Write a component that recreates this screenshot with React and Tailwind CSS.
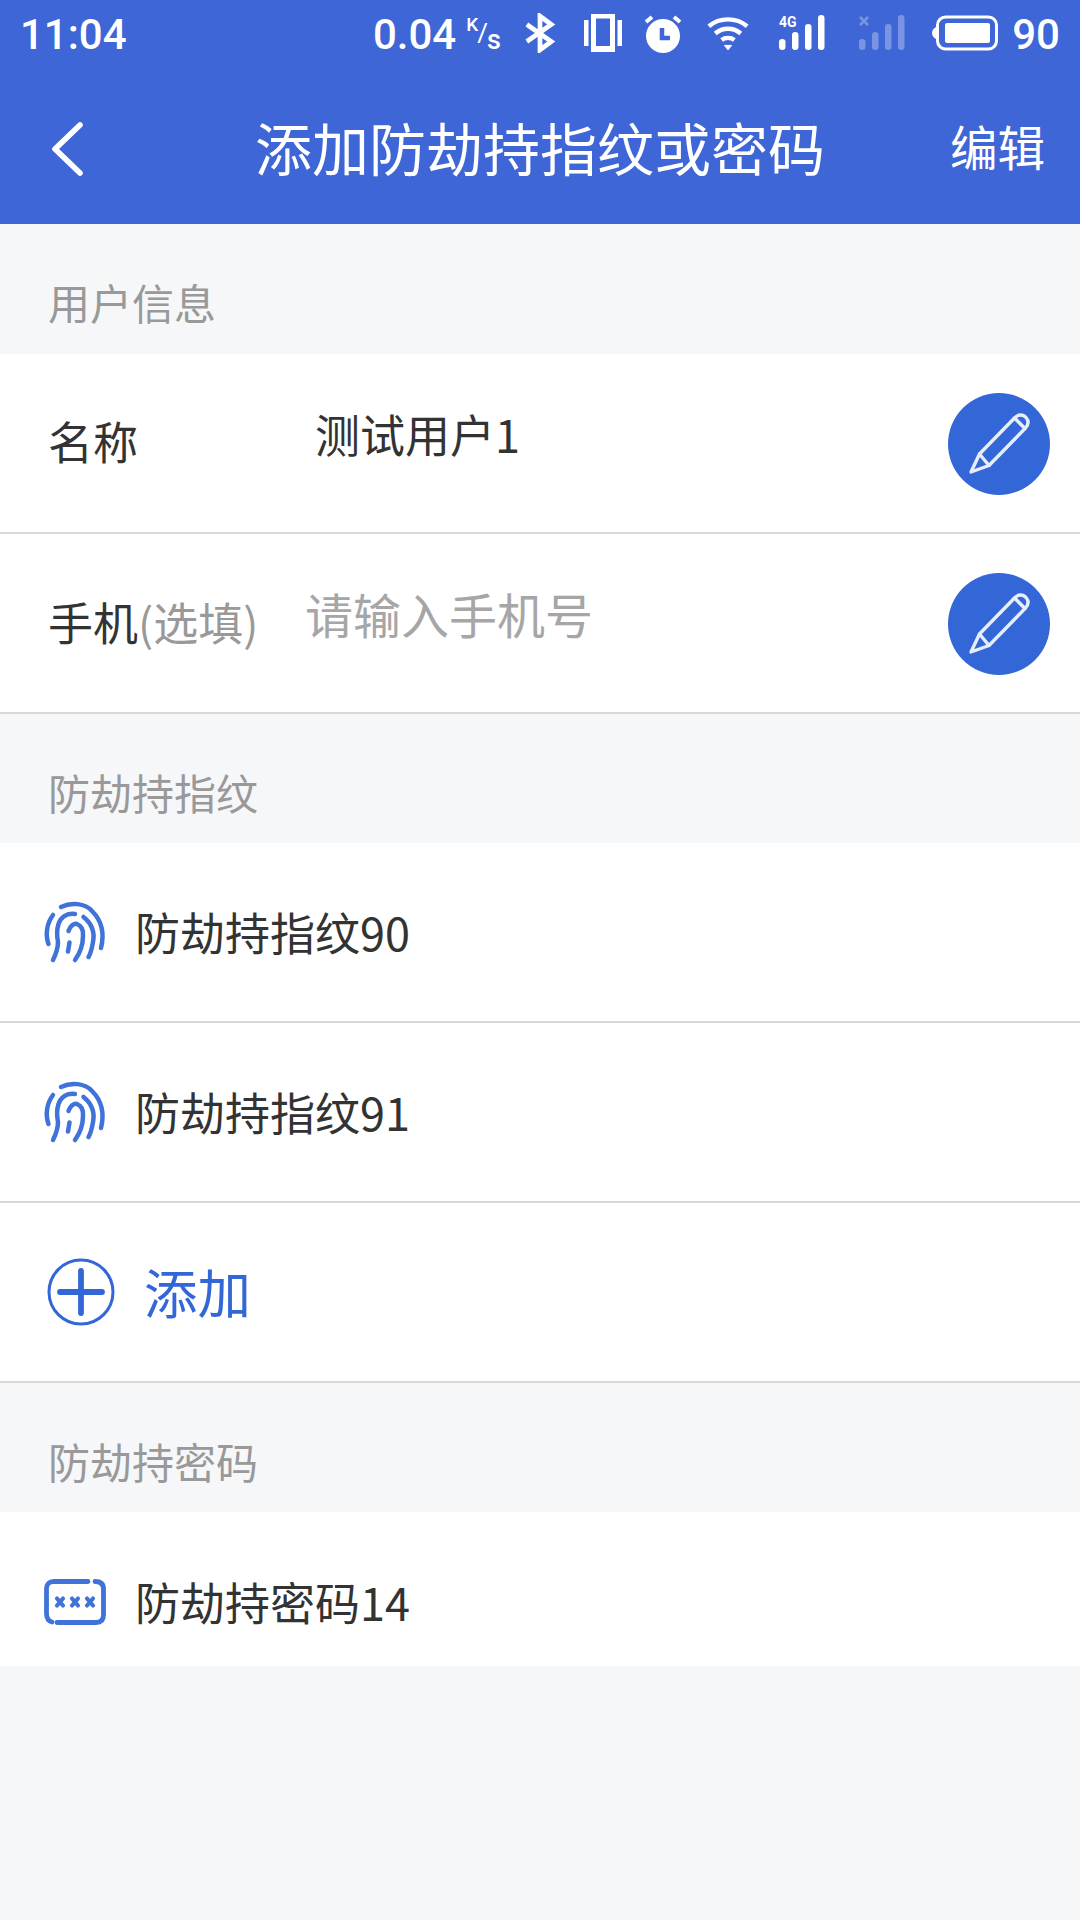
const cjk = { fontFamily: '"Noto Sans CJK SC", "Noto Sans", sans-serif' };

function Pencil() {
  return (
    <div className="w-[102px] h-[102px] rounded-full bg-[#3366d6] flex items-center justify-center shrink-0 mt-[1px]">
      <svg width="102" height="102" viewBox="0 0 102 102" fill="none" stroke="#e6edfb" strokeWidth="3.4" strokeLinejoin="round" strokeLinecap="round">
        <path d="M23 79 L31.5 61 L66.5 25 C70 21 75 21 78 24.5 C81 28 80.5 32 77 35.5 L41 72.5 Z" />
        <path d="M31.5 61 L41 72.5" />
        <path d="M66.5 25 L77 35.5" />
      </svg>
    </div>
  );
}

function Fingerprint() {
  return (
    <svg width="60" height="60" viewBox="0 0 60 60" fill="none" stroke="#3f73da" strokeWidth="4.5" strokeLinecap="round" className="shrink-0 overflow-visible">
      <path d="M16 5 C26 0 40 1 47 9 C56 18 60 30 56 46" />
      <path d="M8 13 C2 21 0 32 3.5 42" />
      <path d="M30 12 C22 11 16 15 13.5 22 C11 30 12 35 13 40 C13 47 11 52 8 58" />
      <path d="M38.5 15 C46 21 50 30 48 40 C47 46 46 51 43.5 55" />
      <path d="M23.5 29 C25 24 29 21 32 22 C37 24 38.5 29 38 34 C38 43 35 51 30 58" />
      <path d="M24.5 40.5 L23 49.5" />
    </svg>
  );
}

function PasswordIcon() {
  return (
    <svg width="62" height="46" viewBox="0 0 62 46" fill="none" className="shrink-0 -ml-[1px] -mr-[1px]">
      <path d="M44 2.5 H10 C5 2.5 2.5 5 2.5 10 V34 C2.5 39 4 42 8 43" stroke="#3f73da" strokeWidth="4.8" strokeLinecap="round" />
      <path d="M51 2.5 C57 2.5 59.5 5 59.5 10 V36 C59.5 41 57 43.5 52 43.5 H13" stroke="#3f73da" strokeWidth="4.8" strokeLinecap="round" />
      <g stroke="#3f73da" strokeWidth="4.2" strokeLinecap="round">
        <path d="M13 19.5 L19 26.5 M19 19.5 L13 26.5" />
        <path d="M28 19.5 L34 26.5 M34 19.5 L28 26.5" />
        <path d="M43 19.5 L49 26.5 M49 19.5 L43 26.5" />
      </g>
    </svg>
  );
}

function Section({ children, cls }) {
  return (
    <div className={`${cls} flex items-end pl-[48px] text-[42px] leading-[56px] text-[#999999]`}>{children}</div>
  );
}

function Row({ children }) {
  return (
    <div className="h-[180px] bg-white flex items-center border-b-2 border-[#d8d8d8]">{children}</div>
  );
}

function Bars() {
  return (
    <>
      <rect x="0" y="24" width="6.5" height="11" rx="3.2" />
      <rect x="13" y="17" width="6.5" height="18" rx="3.2" />
      <rect x="26" y="9" width="6.5" height="26" rx="3.2" />
      <rect x="39" y="0" width="6.5" height="35" rx="3.2" />
    </>
  );
}

function StatusBar() {
  return (
    <div className="h-[66px] flex items-center justify-between pl-[20px] pr-[20px] text-white font-medium text-[42px]" style={{ fontFamily: "Roboto, sans-serif" }}>
      <span className="mt-[2px]">11:04</span>
      <div className="flex items-center">
        <span className="mt-[2px]">0.04</span>
        <div className="ml-[10px] w-[36px] flex items-center leading-none">
          <span className="text-[19px] -mt-[18px]">K</span>
          <span className="text-[26px] font-normal -ml-[1px]">/</span>
          <span className="text-[27px] mt-[14px] -ml-[1px]">s</span>
        </div>
        <svg width="32" height="40" viewBox="0 0 34 40" fill="none" stroke="white" strokeWidth="5" className="ml-[22px]">
          <path d="M3 11 L29 29 L17 38 V2 L29 11 L3 29" />
        </svg>
        <svg width="38" height="38" viewBox="0 0 38 38" fill="white" className="ml-[28px]">
          <rect x="0" y="6" width="4.5" height="26" />
          <rect x="33.5" y="6" width="4.5" height="26" />
          <path fillRule="evenodd" d="M7 0 H31 V38 H7 Z M12 4.5 V32 H26 V4.5 Z" />
        </svg>
        <svg width="40" height="40" viewBox="0 0 40 40" className="ml-[21px]">
          <circle cx="20" cy="23" r="17" fill="white" />
          <path d="M19 15 V25 H27" stroke="#3f66d6" strokeWidth="4.5" fill="none" />
          <path d="M3 9 L9 4 M37 9 L31 4" stroke="white" strokeWidth="4" />
        </svg>
        <svg width="42" height="35" viewBox="0 0 46 38" fill="none" stroke="white" strokeWidth="4.8" className="ml-[24px]">
          <path d="M2 11 C14 1 32 1 44 11" />
          <path d="M9 19 C17 12 29 12 37 19" />
          <path d="M16 26 C20 23 26 23 30 26" />
          <path d="M19 32 L23 37 L27 32 Z" fill="white" strokeWidth="1" />
        </svg>
        <svg width="46" height="36" viewBox="0 0 46 36" fill="white" className="ml-[30px] overflow-visible">
          <text x="0" y="12" fontSize="14" fontWeight="700" fontFamily="Roboto, sans-serif" stroke="none">4G</text>
          <Bars />
        </svg>
        <svg width="46" height="36" viewBox="0 0 46 36" fill="white" opacity="0.3" className="ml-[34px]">
          <path d="M1 2 L9 10 M9 2 L1 10" stroke="white" strokeWidth="2.5" />
          <Bars />
        </svg>
        <svg width="67" height="36" viewBox="0 0 67 36" fill="none" className="ml-[27px]">
          <path d="M0 18 C0 15 2 13 4 12 V24 C2 23 0 21 0 18 Z" fill="white" />
          <rect x="5.5" y="2" width="59" height="32" rx="8" stroke="white" strokeWidth="3" />
          <rect x="13" y="8" width="45" height="20" rx="2" fill="white" />
        </svg>
        <span className="ml-[13px] mt-[2px]">90</span>
      </div>
    </div>
  );
}

export default function App() {
  return (
    <div className="w-[1080px] h-[1920px] bg-[#f6f7f9] flex flex-col overflow-hidden" style={cjk}>
      <div className="bg-[#3f66d6] h-[224px] shrink-0 flex flex-col">
        <StatusBar />
        <div className="flex-1 flex items-center justify-between pl-[50px] pr-[35px] text-white">
          <svg width="36" height="56" viewBox="0 0 36 56" fill="none" stroke="white" strokeWidth="5.6" strokeLinecap="round" strokeLinejoin="round" className="mt-[8px]">
            <path d="M30 4 L5 28 L30 52" />
          </svg>
          <span className="text-[57px] leading-[70px] mt-[1px] ml-[44px] whitespace-nowrap">添加防劫持指纹或密码</span>
          <span className="text-[47.5px] leading-[60px] mt-[2px] whitespace-nowrap">编辑</span>
        </div>
      </div>

      <Section cls="h-[130px] pb-[24px]">用户信息</Section>
      <Row>
        <span className="w-[315px] pl-[48px] text-[45px] text-[#333333] shrink-0 -mt-[5px]">名称</span>
        <span className="flex-1 text-[45px] text-[#333333] -mt-[18px]">测试用户1</span>
        <div className="mr-[30px]"><Pencil /></div>
      </Row>
      <Row>
        <div className="w-[305px] pl-[48px] shrink-0 flex items-baseline whitespace-nowrap -mt-[2px]">
          <span className="text-[45px] text-[#333333]">手机</span>
          <span className="text-[45px] text-[#999999]">(选填)</span>
        </div>
        <span className="flex-1 text-[48px] text-[#a6a6a6] -mt-[21px]">请输入手机号</span>
        <div className="mr-[30px]"><Pencil /></div>
      </Row>

      <Section cls="h-[129px] pb-[23px]">防劫持指纹</Section>
      <Row>
        <div className="ml-[45px] mr-[30px]"><Fingerprint /></div>
        <span className="text-[45px] text-[#333333]">防劫持指纹90</span>
      </Row>
      <Row>
        <div className="ml-[45px] mr-[30px]"><Fingerprint /></div>
        <span className="text-[45px] text-[#333333]">防劫持指纹91</span>
      </Row>
      <Row>
        <svg width="68" height="68" viewBox="0 0 68 68" fill="none" stroke="#3366d6" className="ml-[47px] shrink-0">
          <circle cx="34" cy="34" r="32" strokeWidth="3" />
          <path d="M13 34 H55 M34 13 V55" strokeWidth="5.8" strokeLinecap="round" />
        </svg>
        <span className="ml-[29px] text-[53.5px] text-[#3366d6] -mt-[2px]">添加</span>
      </Row>

      <Section cls="h-[129px] pb-[23px]">防劫持密码</Section>
      <div className="h-[154px] bg-white flex items-center pt-[26px]">
        <div className="ml-[45px] mr-[30px]"><PasswordIcon /></div>
        <span className="text-[45px] text-[#333333]">防劫持密码14</span>
      </div>
    </div>
  );
}
